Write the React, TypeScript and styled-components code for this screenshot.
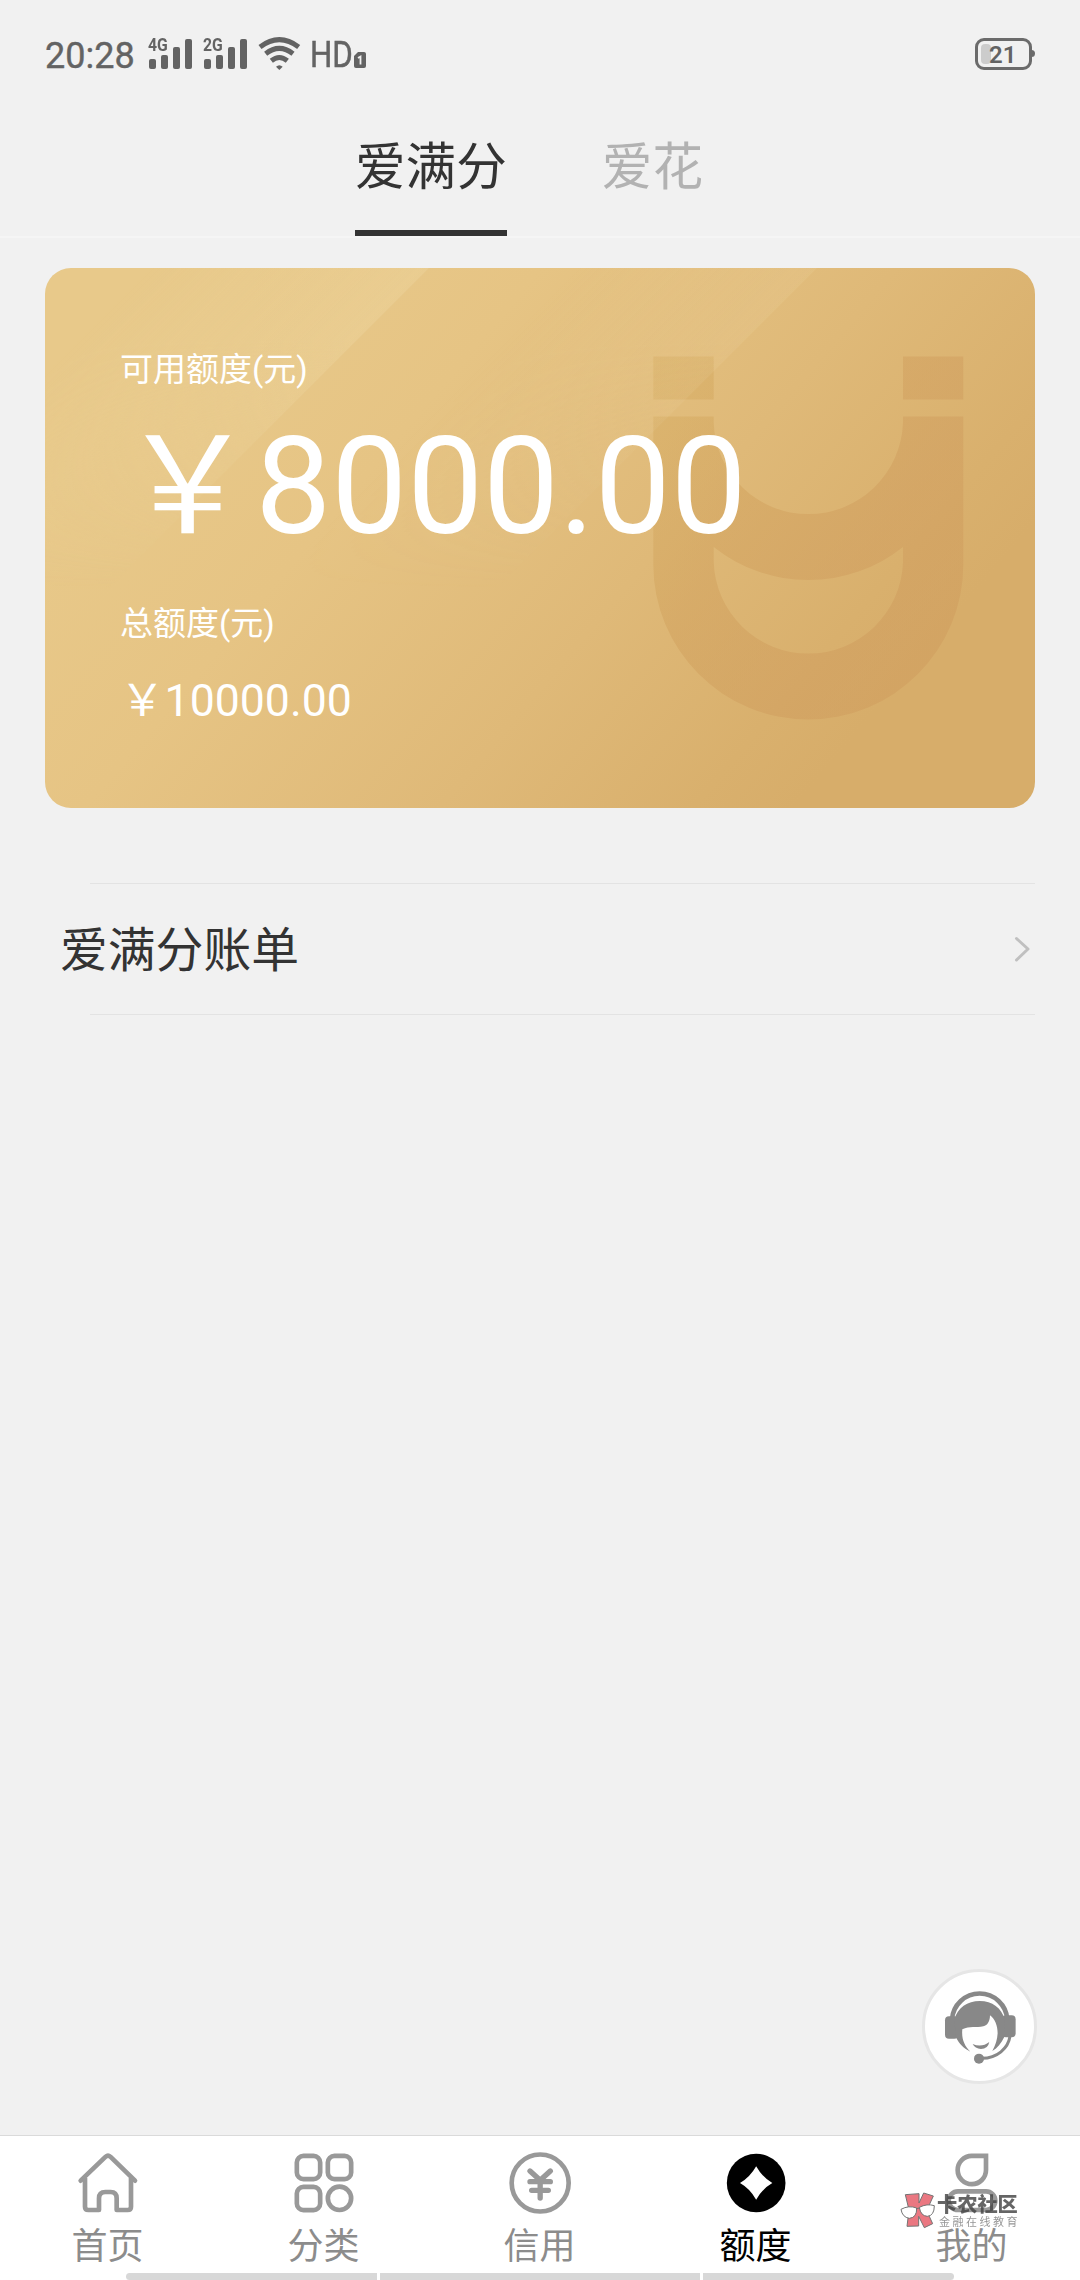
import React from "react";
import styled, { createGlobalStyle } from "styled-components";

const GlobalStyle = createGlobalStyle`
  * { box-sizing: border-box; }
  body { margin: 0; background: #f1f1f1; }
`;

const Screen = styled.div`
  position: relative;
  display: flex;
  flex-direction: column;
  width: 1080px;
  height: 2280px;
  overflow: hidden;
  background: #f1f1f1;
  font-family: Roboto, "Noto Sans CJK SC", sans-serif;
  color: #333;
`;

const StatusBar = styled.header`
  display: flex;
  align-items: center;
  height: 108px;
  padding: 0 45px 0 45px;
  color: #636363;
`;

const Clock = styled.span`
  width: 103px;
  font-size: 36px;
  line-height: 40px;
  margin-top: 4px;
  -webkit-text-stroke: 0.4px #636363;
`;

const SignalSlot = styled.span`
  position: relative;
  width: 55px;
  height: 32px;
`;

const NetworkTag = styled.span`
  position: absolute;
  left: 0;
  top: -1px;
  font-size: 17.5px;
  font-weight: 700;
  line-height: 17px;
  transform: scaleX(0.9);
  transform-origin: 0 50%;
`;

const WifiSlot = styled.span`
  display: flex;
  width: 52px;
`;

const HdText = styled.span`
  font-size: 36px;
  line-height: 40px;
  margin-top: 1px;
  transform: scaleX(0.87);
  transform-origin: 0 50%;
  width: 44px;
  -webkit-text-stroke: 0.5px #636363;
`;

const SimBadge = styled.span`
  display: flex;
  margin-top: 11px;
`;

const Battery = styled.span`
  position: relative;
  display: flex;
  align-items: center;
  width: 57px;
  height: 32px;
  margin-left: auto;
  margin-right: 3px;
  padding-left: 3px;
  border: 3px solid #6b6b6b;
  border-radius: 9px;
  &::after {
    content: "";
    position: absolute;
    right: -6px;
    top: 9px;
    width: 4px;
    height: 7px;
    border-radius: 0 4px 4px 0;
    background: #6b6b6b;
  }
`;

const BatteryFill = styled.span`
  width: 10px;
  height: 20px;
  border-radius: 4px;
  background: #cccccc;
`;

const BatteryLevel = styled.span`
  margin-left: -2px;
  padding-top: 1px;
  font-size: 24px;
  font-weight: 600;
  line-height: 26px;
`;

const Tabs = styled.nav`
  display: flex;
  gap: 95px;
  height: 130px;
  padding-left: 355px;
  border-bottom: 2px solid #f5f5f5;
`;

const Tab = styled.a<{ $active?: boolean }>`
  height: 128px;
  padding-top: 23px;
  font-size: 50.6px;
  line-height: 74px;
  color: ${(p) => (p.$active ? "#333" : "#b2b2b2")};
  border-bottom: 6px solid ${(p) => (p.$active ? "#333" : "transparent")};
`;

const Card = styled.section`
  display: grid;
  width: 990px;
  height: 540px;
  margin: 30px 45px 0;
  border-radius: 26px;
  overflow: hidden;
  color: #fff;
  > * { grid-area: 1 / 1; }
`;

const CardBody = styled.div`
  display: flex;
  flex-direction: column;
  padding: 78px 0 0 75px;
  z-index: 1;
`;

const Label = styled.div`
  font-size: 33px;
  line-height: 48px;
`;

const Amount = styled.div<{ $large?: boolean }>`
  font-size: ${(p) => (p.$large ? "135.2px" : "44.6px")};
  line-height: ${(p) => (p.$large ? "160px" : "60px")};
  margin: ${(p) => (p.$large ? "13px 0 33px" : "23px 0 0")};
`;

const BillRow = styled.a`
  display: flex;
  align-items: center;
  justify-content: space-between;
  height: 132px;
  margin: 75px 45px 0 0;
  padding: 0 5px 0 60px;
  font-size: 47.8px;
  line-height: 70px;
  background:
    linear-gradient(#e3e3e3, #e3e3e3) 90px 0 / 946px 1px no-repeat,
    linear-gradient(#e3e3e3, #e3e3e3) 90px 100% / 946px 1px no-repeat;
`;

const BillTitle = styled.span`
  padding-top: 4px;
`;

const ServiceButton = styled.button`
  position: absolute;
  left: 922px;
  top: 1969px;
  display: grid;
  place-items: center;
  width: 115px;
  height: 115px;
  padding: 0;
  border: 3px solid #e6e6e6;
  border-radius: 50%;
  background: #fff;
`;

const BottomBar = styled.footer`
  display: flex;
  flex-direction: column;
  height: 145px;
  margin-top: auto;
  border-top: 1px solid #dadada;
  background: #fff;
`;

const NavItems = styled.div`
  display: grid;
  grid-template-columns: repeat(5, 1fr);
  height: 137px;
`;

const NavItem = styled.a<{ $active?: boolean }>`
  display: flex;
  flex-direction: column;
  align-items: center;
  padding: 14px 1px 0 0;
  font-size: 36px;
  line-height: 52px;
  color: ${(p) => (p.$active ? "#000" : "#8c8c8c")};
  svg { margin-bottom: 5px; color: ${(p) => (p.$active ? "#000" : "#999")}; }
`;

const GestureHints = styled.div`
  display: flex;
  gap: 3px;
  height: 7px;
  padding-left: 126px;
`;

const Hint = styled.i<{ $w: number; $r?: string }>`
  width: ${(p) => p.$w}px;
  height: 7px;
  border-radius: ${(p) => p.$r || "0"};
  background: #d8d8d8;
`;

const Watermark = styled.div`
  position: absolute;
  left: 899px;
  top: 2191px;
  display: flex;
  gap: 2px;
  opacity: 0.82;
`;

const WatermarkText = styled.div`
  display: flex;
  flex-direction: column;
  padding-top: 2px;
  font-family: "Noto Sans CJK SC", sans-serif;
`;

const WatermarkName = styled.span`
  font-size: 20.2px;
  font-weight: 900;
  line-height: 22px;
  color: #444;
`;

const WatermarkSlogan = styled.span`
  margin-left: 2px;
  font-size: 11px;
  line-height: 12px;
  letter-spacing: 2.5px;
  color: #808080;
`;

function Signal({ tag }: { tag: string }) {
  return (
    <SignalSlot>
      <NetworkTag>{tag}</NetworkTag>
      <svg width="45" height="32" viewBox="0 0 45 32" fill="#636363">
        <rect x="1" y="21" width="7" height="10" rx="2" />
        <rect x="13" y="17" width="7" height="14" rx="2" />
        <rect x="25" y="9" width="7" height="22" rx="2" />
        <rect x="37" y="1" width="7" height="30" rx="2" />
      </svg>
    </SignalSlot>
  );
}

function Wifi() {
  return (
    <svg width="43" height="34" viewBox="-1 0 129 102" fill="none" stroke="#636363" strokeWidth="15">
      <path d="M5 30 Q63 -14 121 30" />
      <path d="M22 50 Q63 18 104 50" />
      <path d="M39 71 Q63 52 87 71" />
      <path d="M53 89 Q63 80 73 89 L63 99Z" fill="#636363" stroke="none" />
    </svg>
  );
}

function CardArt() {
  return (
    <svg width="990" height="540" viewBox="45 268 990 540">
      <defs>
        <linearGradient id="base" gradientUnits="userSpaceOnUse" x1="210" y1="300" x2="800" y2="800">
          <stop offset="0" stopColor="#e8c98a" />
          <stop offset="0.3" stopColor="#e6c484" />
          <stop offset="0.65" stopColor="#dfb978" />
          <stop offset="0.9" stopColor="#d9b06d" />
          <stop offset="1" stopColor="#d7ad6a" />
        </linearGradient>
        <linearGradient id="glow1" gradientUnits="userSpaceOnUse" x1="429" y1="268" x2="289" y2="128">
          <stop offset="0" stopColor="#efd8a2" stopOpacity="0.38" />
          <stop offset="1" stopColor="#efd8a2" stopOpacity="0" />
        </linearGradient>
        <linearGradient id="glow2" gradientUnits="userSpaceOnUse" x1="817" y1="268" x2="697" y2="148">
          <stop offset="0" stopColor="#f3dcae" stopOpacity="0.15" />
          <stop offset="1" stopColor="#f3dcae" stopOpacity="0" />
        </linearGradient>
        <linearGradient id="fadeDown" gradientUnits="userSpaceOnUse" x1="0" y1="340" x2="0" y2="590">
          <stop offset="0" stopColor="#fff" />
          <stop offset="1" stopColor="#000" />
        </linearGradient>
        <linearGradient id="tint" gradientUnits="userSpaceOnUse" x1="653" y1="400" x2="880" y2="530">
          <stop offset="0" stopColor="#cc9f4c" stopOpacity="0.28" />
          <stop offset="0.5" stopColor="#cd9a55" stopOpacity="0.38" />
          <stop offset="1" stopColor="#cd985a" stopOpacity="0.42" />
        </linearGradient>
        <mask id="fade">
          <rect x="45" y="268" width="990" height="540" fill="url(#fadeDown)" />
        </mask>
      </defs>
      <rect x="45" y="268" width="990" height="540" fill="url(#base)" />
      <g fill="url(#tint)">
        <path
          fillRule="evenodd"
          d="M653.3 356.5H713.7V399.5H653.3ZM903 356.5H963.3V399.5H903ZM653.3 416.5H713.7V422.5A94.7 94.7 0 0 0 903 422.5V416.5H963.3V564.5A155 155 0 0 1 653.3 564.5ZM713.7 547V562A94.7 94.7 0 0 0 903 562V547A152 152 0 0 1 713.7 547Z"
        />
      </g>
      <g mask="url(#fade)">
        <path d="M45 268H429L45 652Z" fill="url(#glow1)" />
        <path d="M429 268H817L277 808H45V652Z" fill="url(#glow2)" />
      </g>
    </svg>
  );
}

function HeadsetIcon() {
  return (
    <svg width="73.3" height="75" viewBox="129 147 220 225" fill="#888">
      <path d="M156 238A83.2 83.2 0 0 1 322 238" fill="none" stroke="#888" strokeWidth="14" />
      <rect x="135" y="229" width="40" height="67" rx="12" />
      <rect x="306" y="226" width="41" height="66" rx="12" />
      <path d="M163 240C172 202 203 183 239 183C277 183 305 204 314 238L313 291C303 310 293 324 277 333C287 316 292 298 293 280C293 258 285 237 270 226C270 244 263 256 250 259C229 264 209 258 187 268C184 297 194 318 211 335C191 326 178 312 168 292Z" />
      <path d="M218 312Q245 324 268 306Q264 327 243 327Q225 326 218 312Z" />
      <path d="M330 289C325 325 291 355 246 355" fill="none" stroke="#888" strokeWidth="9" />
      <circle cx="237" cy="356" r="15" />
    </svg>
  );
}

const iconProps = {
  width: 66,
  height: 66,
  fill: "none",
  stroke: "currentColor",
  strokeWidth: 14,
  strokeLinejoin: "round" as const,
  strokeLinecap: "round" as const,
};

function HomeIcon() {
  return (
    <svg {...iconProps} viewBox="224 121 198 198">
      <path d="M241 213L316 141Q323 135 330 141L404 213" />
      <path d="M254 205V291Q254 301 264 301H296V266Q296 247 315 247H331Q349 247 349 266V301H382Q392 301 392 291V205" strokeLinecap="butt" />
    </svg>
  );
}

function CategoryIcon() {
  return (
    <svg {...iconProps} viewBox="871 121 198 198">
      <rect x="888.500" y="138.500" width="70" height="70" rx="20" />
      <rect x="981.500" y="138.500" width="70" height="70" rx="20" />
      <rect x="888.500" y="231.500" width="70" height="70" rx="20" />
      <circle cx="1016.500" cy="266" r="35" />
    </svg>
  );
}

function CreditIcon() {
  return (
    <svg {...iconProps} viewBox="319 121 198 198">
      <circle cx="418.500" cy="220" r="85.500" />
      <path d="M388 184L418.500 212L449 184M388 216H449M393 242H443M418.500 212V265" strokeWidth="16" />
    </svg>
  );
}

function QuotaIcon() {
  return (
    <svg width="66" height="66" viewBox="967 121 198 198">
      <circle cx="1066.500" cy="220" r="88" fill="#000" />
      <path d="M1066.500 170Q1085 203 1115 220Q1085 237 1066.500 270Q1048 237 1018 220Q1048 203 1066.500 170Z" fill="#fff" />
    </svg>
  );
}

function ProfileIcon() {
  return (
    <svg {...iconProps} viewBox="416 121 198 198">
      <path d="M557 138.500H514A42.500 42.500 0 1 0 557 181Z" strokeLinejoin="miter" />
      <rect x="445" y="245" width="140" height="56" rx="28" />
    </svg>
  );
}

function WatermarkLogo() {
  return (
    <svg width="36" height="38" viewBox="295 243 108 114">
      <path d="M314 254L355 251V279L369 249L398 258L378 302L396 341L371 353L354 319V348L319 349L325 300Z" fill="#e65a66" stroke="#555" strokeWidth="3" />
      <path d="M301 298Q324 285 348 294Q349 323 326 325Q305 322 301 298ZM356 292Q379 280 401 287Q401 317 380 319Q360 318 356 292Z" fill="#fff" stroke="#555" strokeWidth="3" />
      <path d="M346 296L358 294" stroke="#555" strokeWidth="3" />
    </svg>
  );
}

const navItems = [
  { label: "首页", Icon: HomeIcon },
  { label: "分类", Icon: CategoryIcon },
  { label: "信用", Icon: CreditIcon },
  { label: "额度", Icon: QuotaIcon, active: true },
  { label: "我的", Icon: ProfileIcon },
];

export default function App() {
  return (
    <Screen>
      <GlobalStyle />
      <StatusBar>
        <Clock>20:28</Clock>
        <Signal tag="4G" />
        <Signal tag="2G" />
        <WifiSlot>
          <Wifi />
        </WifiSlot>
        <HdText>HD</HdText>
        <SimBadge>
          <svg width="12" height="16" viewBox="0 0 12 16">
            <path d="M4 0H10Q12 0 12 2V14Q12 16 10 16H2Q0 16 0 14V4Z" fill="#636363" />
            <path d="M4 6L6.500 4.500V12.500" fill="none" stroke="#f1f1f1" strokeWidth="1.800" />
          </svg>
        </SimBadge>
        <Battery>
          <BatteryFill />
          <BatteryLevel>21</BatteryLevel>
        </Battery>
      </StatusBar>
      <Tabs>
        <Tab $active>爱满分</Tab>
        <Tab>爱花</Tab>
      </Tabs>
      <Card>
        <CardArt />
        <CardBody>
          <Label>可用额度(元)</Label>
          <Amount $large>￥8000.00</Amount>
          <Label>总额度(元)</Label>
          <Amount>￥10000.00</Amount>
        </CardBody>
      </Card>
      <BillRow>
        <BillTitle>爱满分账单</BillTitle>
        <svg width="16" height="26" viewBox="0 0 16 26" fill="none" stroke="#c0c0c0" strokeWidth="3" strokeLinecap="round" strokeLinejoin="round">
          <path d="M2.500 2.500L14 13L2.500 24" />
        </svg>
      </BillRow>
      <BottomBar>
        <NavItems>
          {navItems.map(({ label, Icon, active }) => (
            <NavItem key={label} $active={active}>
              <Icon />
              {label}
            </NavItem>
          ))}
        </NavItems>
        <GestureHints>
          <Hint $w={251} $r="4px 0 0 4px" />
          <Hint $w={320} />
          <Hint $w={251} $r="0 4px 4px 0" />
        </GestureHints>
      </BottomBar>
      <ServiceButton>
        <HeadsetIcon />
      </ServiceButton>
      <Watermark>
        <WatermarkLogo />
        <WatermarkText>
          <WatermarkName>卡农社区</WatermarkName>
          <WatermarkSlogan>金融在线教育</WatermarkSlogan>
        </WatermarkText>
      </Watermark>
    </Screen>
  );
}
